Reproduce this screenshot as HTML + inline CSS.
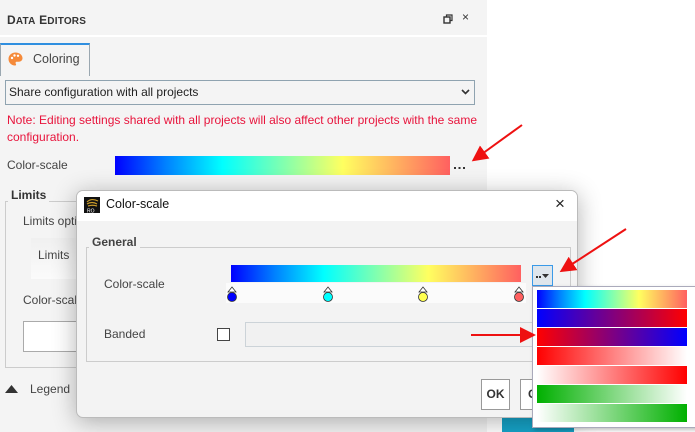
<!DOCTYPE html>
<html><head><meta charset="utf-8"><style>
*{box-sizing:border-box;margin:0;padding:0}
body{width:695px;height:432px;overflow:hidden;background:#fff;font-family:"Liberation Sans","DejaVu Sans",sans-serif;font-size:12px;color:#333;position:relative}
.a{position:absolute}
.panel{left:0;top:0;width:487px;height:432px;background:#f4f4f4}
.g1{background:linear-gradient(to right,#0000ff 0%,#0080ff 15%,#00ffff 32%,#80ffb0 50%,#ffff60 68%,#ffb060 84%,#ff6060 100%)}
.sw{left:537px;width:150px;height:18px}
</style></head><body>
<div class="a panel"></div>
<div class="a" style="left:7px;top:13px;font-weight:bold;font-size:12px;letter-spacing:0.2px;color:#333">D<span style="font-size:10px">ATA</span> E<span style="font-size:10px">DITORS</span></div>
<svg class="a" style="left:443px;top:14px" width="10" height="10"><rect x="1" y="3" width="6" height="6" fill="none" stroke="#333" stroke-width="1.4"/><path d="M3.5 3V1H9v5.5H7" fill="none" stroke="#333" stroke-width="1.2"/></svg>
<div class="a" style="left:462px;top:10px;font-size:12px;color:#333">×</div>
<div class="a" style="left:0;top:35px;width:487px;height:2px;background:#fff"></div>
<!-- tab -->
<div class="a" style="left:0;top:43px;width:90px;height:33px;border-top:2px solid #2f8fe0;border-right:1px solid #9aa7b0;border-left:1px solid #9aa7b0;background:#f4f4f4"></div>
<svg class="a" style="left:8px;top:52px" width="15" height="14" viewBox="0 0 15 14"><path d="M7.5 0.5C3.5 0.5 0.5 3.3 0.5 7c0 3.7 3 6.5 6.3 6.5 1.3 0 1.6-1 1-1.8-.6-.9-.1-2 1-2h2c2 0 3.7-1.5 3.7-3.5C14.5 3 11.5.5 7.5.5z" fill="#f58a3a"/><circle cx="4" cy="6" r="1.2" fill="#fff"/><circle cx="6.5" cy="3.5" r="1.2" fill="#fff"/><circle cx="10" cy="3.8" r="1.2" fill="#fff"/></svg>
<div class="a" style="left:33px;top:52px;font-size:12.5px;color:#444">Coloring</div>
<!-- select -->
<div class="a" style="left:5px;top:80px;width:470px;height:25px;border:1px solid #8fa3b0;background:#f4f4f4"></div>
<div class="a" style="left:9px;top:85px;font-size:12px;color:#222">Share configuration with all projects</div>
<svg class="a" style="left:461px;top:89px" width="9" height="6"><path d="M1 1l3.5 3.5L8 1" stroke="#333" stroke-width="1.6" fill="none"/></svg>
<div class="a" style="left:7px;top:112px;width:475px;font-size:12px;line-height:17px;color:#e8143c">Note: Editing settings shared with all projects will also affect other projects with the same configuration.</div>
<div class="a" style="left:7px;top:158px;font-size:12px;color:#444">Color-scale</div>
<div class="a g1" style="left:115px;top:156px;width:335px;height:19px"></div>
<svg class="a" style="left:454px;top:166px" width="12" height="4"><rect x="0" y="1" width="2" height="2" fill="#333"/><rect x="4.5" y="1" width="2" height="2" fill="#333"/><rect x="9" y="1" width="2" height="2" fill="#333"/></svg>
<!-- limits group -->
<div class="a" style="left:5px;top:201px;width:480px;height:167px;border:1px solid #ccc;border-right:none"></div>
<div class="a" style="left:8px;top:188px;padding:0 3px;background:#f4f4f4;font-weight:bold;font-size:12px;color:#333">Limits</div>
<div class="a" style="left:23px;top:214px;font-size:12px;color:#444">Limits opti</div>
<div class="a" style="left:31px;top:238px;width:50px;height:41px;background:linear-gradient(#f0f0f0,#fbfbfb)"></div>
<div class="a" style="left:38px;top:248px;font-size:12px;color:#444">Limits</div>
<div class="a" style="left:23px;top:293px;font-size:12px;color:#444">Color-scale</div>
<div class="a" style="left:23px;top:321px;width:60px;height:31px;border:1px solid #aaa;background:#fff"></div>
<svg class="a" style="left:5px;top:385px" width="13" height="8"><path d="M0 8L6.5 0L13 8z" fill="#333"/></svg>
<div class="a" style="left:30px;top:382px;font-size:12px;color:#444">Legend</div>
<!-- teal bottom -->
<div class="a" style="left:502px;top:417px;width:72px;height:15px;background:#16a3c8"></div>
<!-- dialog -->
<div class="a" style="left:76px;top:190px;width:502px;height:228px;border:1px solid #bbb;border-radius:7px;background:#f3f3f3;box-shadow:0 4px 24px rgba(0,0,0,0.3);overflow:hidden">
<div style="height:30px;background:#fff"></div>
</div>
<svg class="a" style="left:84px;top:197px" width="16" height="16"><rect width="16" height="16" fill="#111"/><path d="M3 5c3-3 7-3 11-1M3 7c3-2 7-2 10 0M4 9c3-1 6-1 9 0" stroke="#c89a2a" stroke-width="1.2" fill="none"/><text x="3" y="15.5" font-size="5" fill="#fff" font-family="Liberation Sans">RO</text></svg>
<div class="a" style="left:106px;top:197px;font-size:12.5px;color:#111">Color-scale</div>
<div class="a" style="left:555px;top:194px;font-size:17px;color:#222">×</div>
<div class="a" style="left:86px;top:247px;width:485px;height:115px;border:1px solid #ccc"></div>
<div class="a" style="left:89px;top:235px;padding:0 3px;background:#f3f3f3;font-weight:bold;font-size:12px;color:#444">General</div>
<div class="a" style="left:104px;top:277px;font-size:12px;color:#444">Color-scale</div>
<div class="a g1" style="left:231px;top:265px;width:290px;height:17px"></div>
<div class="a" style="left:226px;top:283px;width:300px;height:20px;background:#fbfbfb"></div>
<svg class="a" style="left:226px;top:284px" width="300" height="20">
<g stroke="#333" stroke-width="0.8"><path d="M2 8l4-5 4 5z" fill="#fff"/><circle cx="6" cy="13" r="4.5" fill="#0000ff"/>
<path d="M98 8l4-5 4 5z" fill="#fff"/><circle cx="102" cy="13" r="4.5" fill="#00ffff"/>
<path d="M193 8l4-5 4 5z" fill="#fff"/><circle cx="197" cy="13" r="4.5" fill="#ffff50"/>
<path d="M289 8l4-5 4 5z" fill="#fff"/><circle cx="293" cy="13" r="4.5" fill="#ff6060"/></g></svg>
<div class="a" style="left:104px;top:327px;font-size:12px;color:#444">Banded</div>
<div class="a" style="left:217px;top:328px;width:13px;height:13px;border:1px solid #444;background:#fff"></div>
<div class="a" style="left:245px;top:322px;width:300px;height:25px;border:1px solid #ccd3d8;background:#f1f1f1"></div>
<div class="a" style="left:481px;top:379px;width:29px;height:31px;border:1px solid #999;background:#fff;font-weight:bold;font-size:12px;text-align:center;line-height:29px;color:#333">OK</div>
<div class="a" style="left:520px;top:379px;width:30px;height:31px;border:1px solid #999;background:#fff;font-weight:bold;font-size:12px;line-height:29px;padding-left:7px;color:#333">C</div>
<div class="a" style="left:532px;top:265px;width:21px;height:21px;border:1px solid #3a9ae8;background:#dfe6ec"></div>
<svg class="a" style="left:535px;top:272px" width="16" height="8"><rect x="1" y="4" width="2" height="2" fill="#333"/><rect x="4" y="4" width="2" height="2" fill="#333"/><path d="M7 2h7l-3.5 4z" fill="#333"/></svg>
<!-- popup -->
<div class="a" style="left:532px;top:286px;width:165px;height:142px;background:#fff;border:1px solid #aab;box-shadow:2px 2px 4px rgba(0,0,0,0.25)"></div>
<div class="a sw g1" style="top:290px"></div>
<div class="a sw" style="top:309px;background:linear-gradient(to right,#0000ff,#ff0000)"></div>
<div class="a sw" style="top:328px;background:linear-gradient(to right,#ff0000,#0000ff)"></div>
<div class="a sw" style="top:347px;background:linear-gradient(to right,#ff0000,#ffffff)"></div>
<div class="a sw" style="top:366px;background:linear-gradient(to right,#ffffff,#ff0000)"></div>
<div class="a sw" style="top:385px;background:linear-gradient(to right,#00b000,#ffffff)"></div>
<div class="a sw" style="top:404px;background:linear-gradient(to right,#ffffff,#00b000)"></div>
<!-- arrows -->
<svg class="a" style="left:0;top:0" width="695" height="432">
<defs><marker id="m" markerWidth="8" markerHeight="8" refX="6" refY="4" orient="auto"><path d="M0 0L8 4L0 8z" fill="#ee1111"/></marker></defs>
<g stroke="#ee1111" stroke-width="2" fill="none" marker-end="url(#m)">
<line x1="522" y1="125" x2="475" y2="159"/>
<line x1="626" y1="229" x2="563" y2="270"/>
<line x1="471" y1="335" x2="532" y2="335"/>
</g></svg>
</body></html>
